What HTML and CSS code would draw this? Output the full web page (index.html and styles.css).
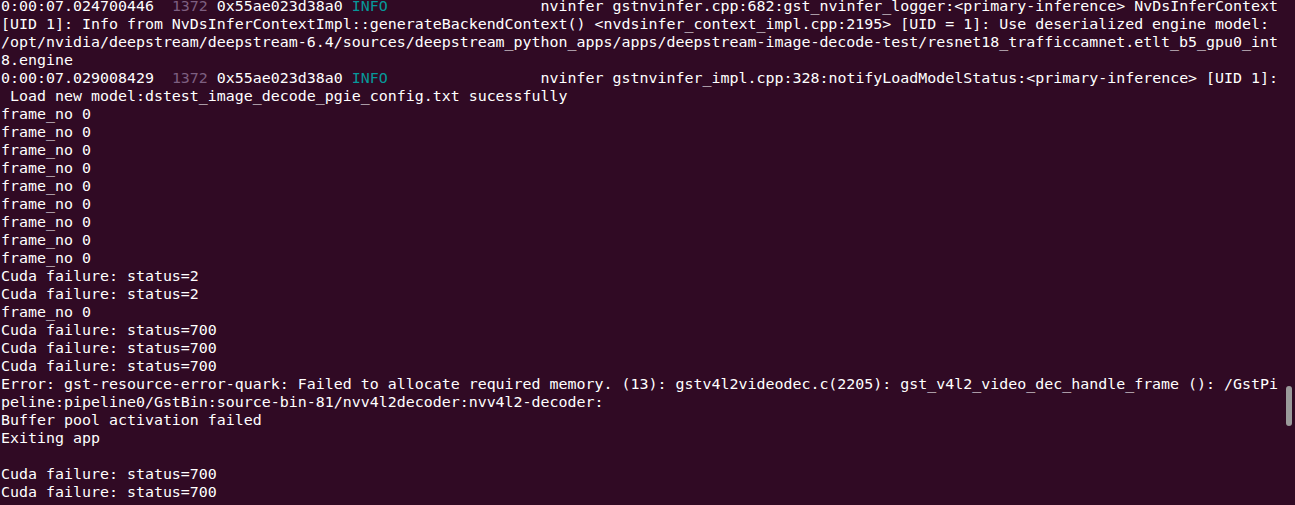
FILE: index.html
```html
<!DOCTYPE html>
<html>
<head>
<meta charset="utf-8">
<link rel="stylesheet" href="styles.css">
</head>
<body>
<div class="terminal">
<pre class="output">0:00:07.024700446  <span class="pid">1372</span> 0x55ae023d38a0 <span class="info">INFO</span>                 nvinfer gstnvinfer.cpp:682:gst_nvinfer_logger:&lt;primary-inference&gt; NvDsInferContext
[UID 1]: Info from NvDsInferContextImpl::generateBackendContext() &lt;nvdsinfer_context_impl.cpp:2195&gt; [UID = 1]: Use deserialized engine model:
/opt/nvidia/deepstream/deepstream-6.4/sources/deepstream_python_apps/apps/deepstream-image-decode-test/resnet18_trafficcamnet.etlt_b5_gpu0_int
8.engine
0:00:07.029008429  <span class="pid">1372</span> 0x55ae023d38a0 <span class="info">INFO</span>                 nvinfer gstnvinfer_impl.cpp:328:notifyLoadModelStatus:&lt;primary-inference&gt; [UID 1]:
 Load new model:dstest_image_decode_pgie_config.txt sucessfully
frame_no 0
frame_no 0
frame_no 0
frame_no 0
frame_no 0
frame_no 0
frame_no 0
frame_no 0
frame_no 0
Cuda failure: status=2
Cuda failure: status=2
frame_no 0
Cuda failure: status=700
Cuda failure: status=700
Cuda failure: status=700
Error: gst-resource-error-quark: Failed to allocate required memory. (13): gstv4l2videodec.c(2205): gst_v4l2_video_dec_handle_frame (): /GstPi
peline:pipeline0/GstBin:source-bin-81/nvv4l2decoder:nvv4l2-decoder:
Buffer pool activation failed
Exiting app

Cuda failure: status=700
Cuda failure: status=700
</pre>
<div class="scrollbar"></div>
</div>
</body>
</html>
```

FILE: styles.css
```css
html, body {
  margin: 0;
  padding: 0;
  background: #300a24;
  overflow: hidden;
}

.terminal {
  position: relative;
  width: 1295px;
  height: 505px;
  background: #300a24;
  overflow: hidden;
}

.output {
  margin: -3px 0 0 0;
  padding: 0 0 0 1px;
  font-family: "DejaVu Sans Mono", "Liberation Mono", monospace;
  font-size: 14.95px;
  line-height: 18px;
  color: #ffffff;
  white-space: pre;
}

.pid {
  color: #7d5f80;
}

.info {
  color: #06989a;
}

.scrollbar {
  position: absolute;
  left: 1286px;
  top: 386px;
  width: 6px;
  height: 40px;
  border-radius: 3px;
  background: #9a9a9a;
}
```
